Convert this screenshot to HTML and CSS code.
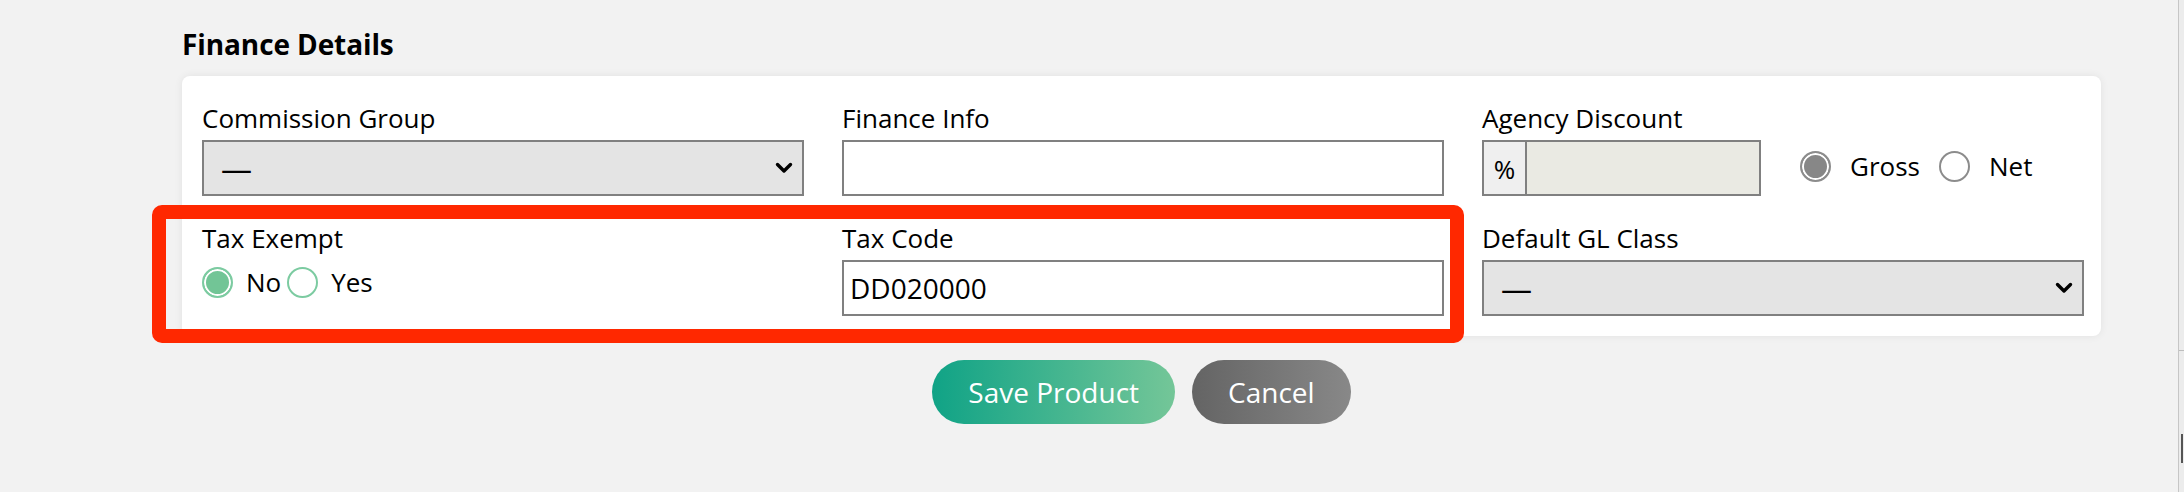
FILE: index.html
```html
<!DOCTYPE html>
<html lang="en">
<head>
<meta charset="utf-8">
<title>Finance Details</title>
<link rel="stylesheet" href="styles.css">
</head>
<body>
<div class="page">
  <h2 class="section-title">Finance Details</h2>
  <div class="card">
    <div class="grid">
      <div class="field">
        <div class="label">Commission Group</div>
        <div class="select">
          <span class="select-value">—</span>
          <svg class="chevron" width="18" height="12" viewBox="0 0 18 12"><path d="M2.5 2.5 L9 9 L15.5 2.5" fill="none" stroke="#000" stroke-width="3.4" stroke-linecap="round" stroke-linejoin="round"/></svg>
        </div>
      </div>
      <div class="field">
        <div class="label">Finance Info</div>
        <input class="text-input" type="text" value="">
      </div>
      <div class="field">
        <div class="label">Agency Discount</div>
        <div class="agency-row">
          <div class="input-group">
            <span class="addon">%</span>
            <span class="addon-input"></span>
          </div>
          <div class="radio-group gross-net">
            <span class="radio grey checked"></span>
            <span class="radio-text">Gross</span>
            <span class="radio grey"></span>
            <span class="radio-text">Net</span>
          </div>
        </div>
      </div>
      <div class="field">
        <div class="label">Tax Exempt</div>
        <div class="radio-group tax-exempt">
          <span class="radio green checked"></span>
          <span class="radio-text">No</span>
          <span class="radio green"></span>
          <span class="radio-text">Yes</span>
        </div>
      </div>
      <div class="field">
        <div class="label">Tax Code</div>
        <input class="text-input" type="text" value="DD020000">
      </div>
      <div class="field">
        <div class="label">Default GL Class</div>
        <div class="select">
          <span class="select-value">—</span>
          <svg class="chevron" width="18" height="12" viewBox="0 0 18 12"><path d="M2.5 2.5 L9 9 L15.5 2.5" fill="none" stroke="#000" stroke-width="3.4" stroke-linecap="round" stroke-linejoin="round"/></svg>
        </div>
      </div>
    </div>
  </div>
  <div class="actions">
    <button class="btn btn-save" type="button">Save Product</button>
    <button class="btn btn-cancel" type="button">Cancel</button>
  </div>
</div>
<div class="highlight"></div>
<div class="scroll-edge">
  <div class="scroll-track"><span class="scroll-thumb"></span></div>
</div>
</body>
</html>
```

FILE: styles.css
```css
* { box-sizing: border-box; }
html, body {
  margin: 0;
  padding: 0;
  background: #f2f2f2;
  font-family: "Open Sans", "Noto Sans", "Liberation Sans", sans-serif;
  color: #000;
}
body { height: 492px; overflow: hidden; position: relative; }

.page {
  padding-left: 182px;
  width: 2101px;
}

.section-title {
  margin: 0;
  padding-top: 25px;
  font-size: 28px;
  line-height: 38px;
  font-weight: 700;
  letter-spacing: -0.1px;
  height: 76px;
}

.card {
  width: 1919px;
  height: 260px;
  background: #fff;
  border-radius: 8px;
  box-shadow: 0 0 8px rgba(0, 0, 0, 0.07);
  padding: 27px 17px 20px 20px;
}

.grid {
  display: grid;
  grid-template-columns: repeat(3, 602px);
  column-gap: 38px;
  row-gap: 27px;
}

.label {
  font-size: 26px;
  line-height: 30px;
  height: 30px;
  margin-bottom: 7px;
  white-space: nowrap;
}

.select {
  height: 56px;
  background: #e4e4e4;
  border: 2px solid #808080;
  display: flex;
  align-items: center;
  justify-content: space-between;
  padding: 0 9px 0 17px;
}
.select-value {
  font-size: 31px;
  line-height: 1;
}

.text-input {
  display: block;
  width: 100%;
  height: 56px;
  border: 2px solid #808080;
  background: #fff;
  padding: 0 6px;
  font-family: inherit;
  font-size: 28px;
  color: #000;
  outline: none;
  margin: 0;
}

.agency-row {
  display: flex;
  align-items: flex-start;
}
.input-group {
  display: flex;
  width: 279px;
  height: 56px;
  border: 2px solid #808080;
}
.addon {
  width: 43px;
  background: #efefef;
  border-right: 2px solid #808080;
  display: flex;
  align-items: center;
  justify-content: center;
  font-size: 26px;
  padding-top: 2px;
}
.addon-input {
  flex: 1;
  background: #eaeae3;
}

.radio-group {
  display: flex;
  align-items: center;
  font-size: 26px;
}
.radio {
  width: 31px;
  height: 31px;
  border-radius: 50%;
  flex: none;
  background: #fff;
}
.radio.grey { border: 2px solid #8c8c8c; }
.radio.grey.checked { background: #878787; box-shadow: inset 0 0 0 2px #fff; }
.radio.green { border: 2px solid #7ccba1; }
.radio.green.checked { background: #72c596; box-shadow: inset 0 0 0 2px #fff; }

.gross-net {
  margin-left: 39px;
  margin-top: 8px;
}
.gross-net .radio-text { margin-left: 19px; margin-right: 19px; }

.tax-exempt { margin-top: 11px; }
.tax-exempt .radio-text { margin-left: 13px; margin-right: 6px; }

.actions {
  width: 1919px;
  display: flex;
  justify-content: center;
  gap: 17px;
  margin-top: 24px;
}
.btn {
  height: 64px;
  border: none;
  border-radius: 32px;
  padding: 0 36px;
  font-family: inherit;
  font-size: 28px;
  color: #fff;
  cursor: pointer;
}
.btn-save { background: linear-gradient(90deg, #10a386 0%, #74c698 100%); }
.btn-cancel { background: linear-gradient(90deg, #646464 0%, #888888 100%); }

.highlight {
  position: absolute;
  left: 152px;
  top: 205px;
  width: 1312px;
  height: 138px;
  border: 14px solid #ff2800;
  border-radius: 10px;
  pointer-events: none;
}

.scroll-edge {
  position: absolute;
  top: 0;
  right: 0;
  width: 6px;
  height: 492px;
  background: #ececec;
  border-left: 1px solid #c6c6c6;
}
.scroll-track {
  position: absolute;
  left: 0;
  right: 0;
  top: 350px;
  height: 120px;
  border-top: 1px solid #bdbdbd;
}
.scroll-thumb {
  position: absolute;
  left: 2px;
  width: 2px;
  top: 83px;
  height: 29px;
  background: #555;
}
```
